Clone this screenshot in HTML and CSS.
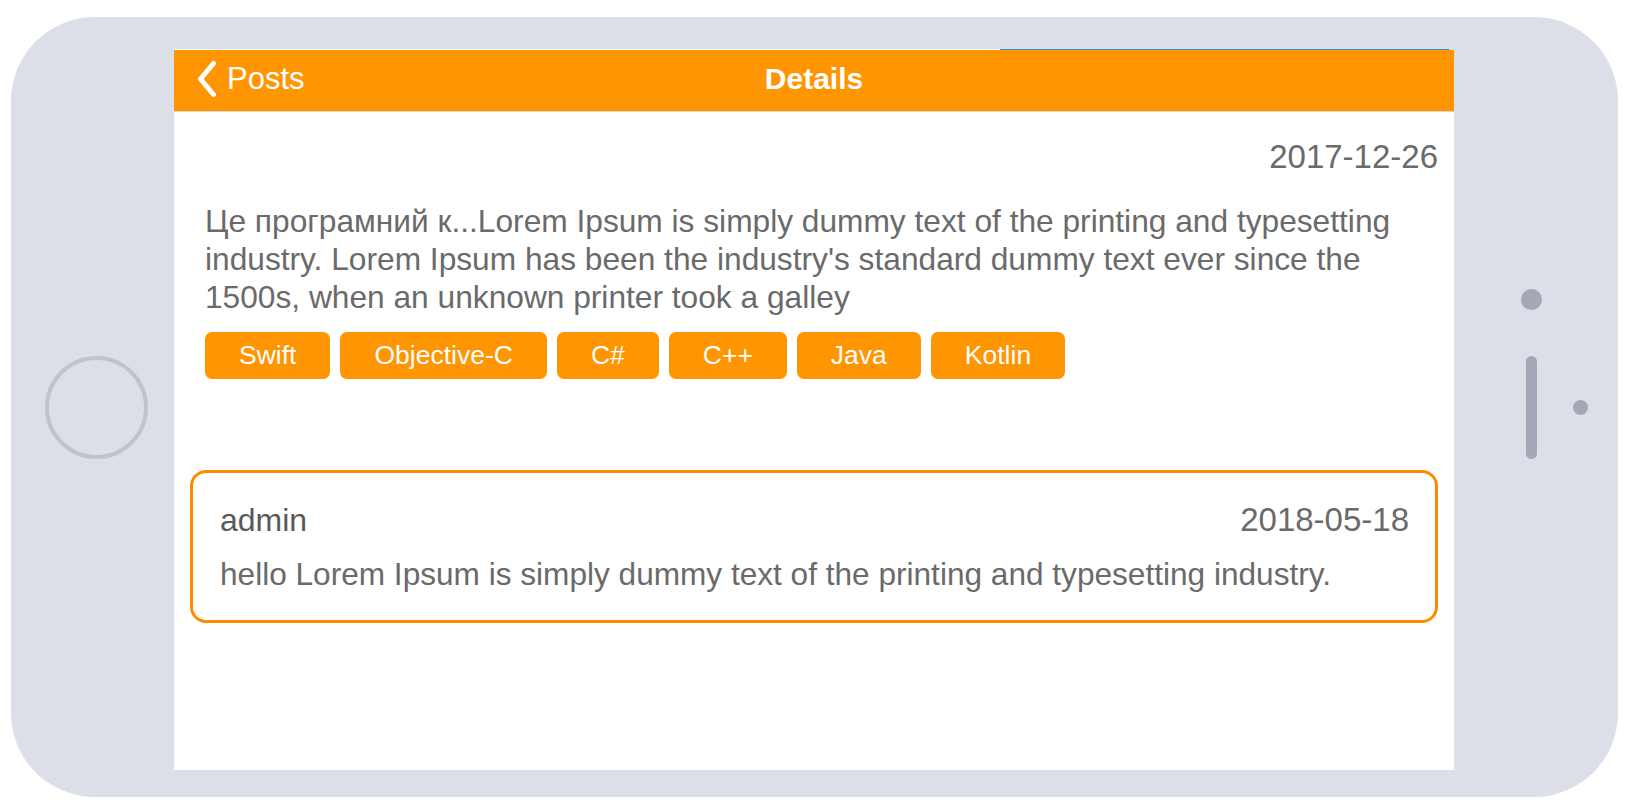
FILE: index.html
```html
<!DOCTYPE html>
<html lang="en">
<head>
    <meta charset="UTF-8">
    <meta name="viewport" content="width=device-width, initial-scale=1.0">
    <title>Details</title>
<link rel="stylesheet" href="styles.css">
</head>

<body>
    <div class="phone">

        <div class="phone-left">
            <div class="home-button"></div>
        </div>

        <div class="screen">
            <div class="status-line"></div>

            <div class="nav">
                <div class="nav-back">
                    <svg width="22" height="38" viewBox="0 0 22 38">
                        <polyline points="17.5,3.5 4.5,19 17.5,34.5" fill="none" stroke="#fff" stroke-width="5" stroke-linecap="round" stroke-linejoin="round"/>
                    </svg>
                    <span>Posts</span>
                </div>
                <div class="nav-title">Details</div>
                <div></div>
            </div>

            <div class="post">
                <p class="post-date">2017-12-26</p>
                <p class="post-text">Це програмний к...Lorem Ipsum is simply dummy text of the printing and typesetting industry. Lorem Ipsum has been the industry's standard dummy text ever since the 1500s, when an unknown printer took a galley</p>

                <div class="tags">
                    <span class="tag">Swift</span>
                    <span class="tag">Objective-C</span>
                    <span class="tag">C#</span>
                    <span class="tag">C++</span>
                    <span class="tag">Java</span>
                    <span class="tag">Kotlin</span>
                </div>
            </div>

            <div class="comment">
                <div class="comment-head">
                    <span class="comment-author">admin</span>
                    <span class="comment-date">2018-05-18</span>
                </div>
                <p class="comment-text">hello Lorem Ipsum is simply dummy text of the printing and typesetting industry.</p>
            </div>
        </div>

        <div class="phone-right">
            <div class="camera"></div>
            <div class="side-row">
                <div class="speaker"></div>
                <div class="sensor"></div>
            </div>
        </div>

    </div>
</body>
</html>
```

FILE: styles.css
```css
* {
    margin: 0;
    padding: 0;
    font-family: "Liberation Sans", Arial, sans-serif;
    box-sizing: border-box;
}

body {
    background-color: #ffffff;
    padding: 17px 11px 15px 11px;
}

.phone {
    display: flex;
    height: 780px;
    background: #dcdfe7;
    border-radius: 84px;
}

.phone-left {
    width: 163px;
    display: flex;
    align-items: center;
    padding-left: 34px;
}

.home-button {
    width: 103px;
    height: 103px;
    border: 4px solid #bfc3cf;
    border-radius: 50%;
}

.screen {
    width: 1280px;
    height: 721px;
    margin-top: 32px;
    background: #ffffff;
}

.status-line {
    height: 1px;
    background: linear-gradient(to right, #ffffff 826px, #3c8fcc 826px, #3c8fcc 1275px, #dcdfe7 1275px);
}

.nav {
    display: grid;
    grid-template-columns: 1fr auto 1fr;
    align-items: center;
    height: 62px;
    padding-bottom: 4px;
    background: #ff9500;
    border-bottom: 1px solid #d9d9d9;
    color: #fff;
}

.nav-back {
    display: flex;
    align-items: center;
    gap: 9px;
    padding-left: 22px;
    font-size: 31px;
}

.nav-back svg {
    display: block;
}

.nav-title {
    font-size: 30px;
    font-weight: bold;
}

.post {
    padding: 26px 16px 0 31px;
}

.post-date {
    text-align: right;
    font-size: 33px;
    line-height: 38px;
    color: #6a6a6a;
}

.post-text {
    margin-top: 26px;
    font-size: 31.7px;
    line-height: 38px;
    color: #6a6a6a;
}

.tags {
    display: flex;
    gap: 10px;
    margin-top: 16px;
}

.tag {
    height: 47px;
    line-height: 47px;
    padding: 0 34px;
    background: #ff9500;
    color: #fff;
    font-size: 26.5px;
    border-radius: 7px;
}

.comment {
    margin: 91px 16px 0 16px;
    padding: 28px 26px 27px 27px;
    border: 3px solid #ff8a00;
    border-radius: 16px;
}

.comment-head {
    display: flex;
    justify-content: space-between;
    align-items: baseline;
    line-height: 38px;
}

.comment-author {
    font-size: 32px;
    color: #595959;
}

.comment-date {
    font-size: 33px;
    color: #6a6a6a;
}

.comment-text {
    margin-top: 16px;
    font-size: 31.6px;
    line-height: 38px;
    color: #6a6a6a;
}

.phone-right {
    flex: 1;
    padding-top: 272px;
    padding-left: 67px;
}

.camera {
    width: 21px;
    height: 21px;
    border-radius: 50%;
    background: #a4a7b5;
}

.side-row {
    display: flex;
    align-items: center;
    margin-top: 46px;
}

.speaker {
    width: 11px;
    height: 103px;
    margin-left: 5px;
    border-radius: 6px;
    background: #a4a7b5;
}

.sensor {
    width: 15px;
    height: 15px;
    margin-left: 36px;
    border-radius: 50%;
    background: #a4a7b5;
}
```
